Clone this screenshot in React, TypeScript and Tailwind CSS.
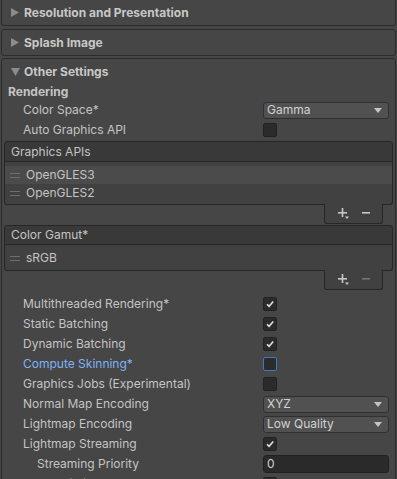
const font = "font-['Inter','Liberation_Sans',sans-serif]";

const RightArrow = () => (
    <svg width="8" height="9" viewBox="0 0 8 9" className="shrink-0">
        <polygon points="0,0 8,4.5 0,9" fill="#8c8c8c" />
    </svg>
);

const DownArrow = () => (
    <svg width="9" height="8" viewBox="0 0 9 8" className="shrink-0">
        <polygon points="0,0 9,0 4.5,8" fill="#8c8c8c" />
    </svg>
);

const Check = () => (
    <svg width="10" height="10" viewBox="0 0 10 10">
        <path d="M2 5.2 L4.1 7.3 L8.2 2.6" stroke="#e4e4e4" strokeWidth="1.5" fill="none" />
    </svg>
);

const Checkbox = ({ checked = false, focused = false }: { checked?: boolean; focused?: boolean }) => (
    <div
        className={`w-[14px] h-[14px] rounded-[2px] bg-[#2b2b2b] border flex items-center justify-center ${focused ? "border-[#3c7bc4]" : "border-[#222222]"}`}
    >
        {checked && <Check />}
    </div>
);

const Dropdown = ({ value }: { value: string }) => (
    <div className="h-[17px] w-full bg-[#515151] border border-[#303030] rounded-[3px] flex items-center justify-between pl-[3px] pr-[6px] text-[12px] text-[#d2d2d2]">
        <span>{value}</span>
        <svg width="8" height="5" viewBox="0 0 8 5">
            <polygon points="0,0 8,0 4,5" fill="#c4c4c4" />
        </svg>
    </div>
);

const Field = ({ value }: { value: string }) => (
    <div className="h-[18px] w-full bg-[#2a2a2a] border border-[#212121] rounded-[3px] flex items-center pl-[3px] text-[12px] text-[#d2d2d2]">
        {value}
    </div>
);

const Row = ({
    label,
    children,
    indent = false,
    blue = false,
    className = "mt-[2px]",
}: {
    label: string;
    children?: React.ReactNode;
    indent?: boolean;
    blue?: boolean;
    className?: string;
}) => (
    <div className={`flex items-center h-[18px] ${className}`}>
        <div
            className={`flex-1 text-[12px] ${indent ? "pl-[35px]" : "pl-[21px]"} ${blue ? "text-[#7fb2f5]" : "text-[#c4c4c4]"}`}
        >
            {label}
        </div>
        <div className="w-[126px] mr-[6px] flex items-center">{children}</div>
    </div>
);

const Handle = () => (
    <div className="w-[10px] flex flex-col gap-[3px] shrink-0">
        <div className="h-[1px] bg-[#6e6e6e]" />
        <div className="h-[1px] bg-[#6e6e6e]" />
    </div>
);

const PlusIcon = () => (
    <svg width="12" height="12" viewBox="0 0 12 12">
        <rect x="0" y="4" width="9" height="1.6" fill="#c8c8c8" />
        <rect x="3.7" y="0" width="1.6" height="9" fill="#c8c8c8" />
        <polygon points="7,8.5 11,8.5 9,11" fill="#c8c8c8" />
    </svg>
);

const MinusIcon = ({ dim = false }: { dim?: boolean }) => (
    <svg width="8" height="2" viewBox="0 0 8 2">
        <rect x="0" y="0" width="8" height="1.6" fill={dim ? "#747474" : "#c8c8c8"} />
    </svg>
);

const ReorderList = ({
    title,
    items,
    selected,
    canRemove = true,
    headerClass,
    bodyPad,
}: {
    title: string;
    items: string[];
    selected?: number;
    canRemove?: boolean;
    headerClass: string;
    bodyPad: string;
}) => (
    <div className="ml-[2px] mr-[2px]">
        <div
            className={`border border-[#262626] rounded-t-[3px] bg-[#393939] flex items-center pl-[6px] text-[12px] text-[#c4c4c4] ${headerClass}`}
        >
            {title}
        </div>
        <div className={`border-x border-b border-[#262626] rounded-b-[3px] bg-[#414141] pt-[4px] ${bodyPad}`}>
            {items.map((item, i) => (
                <div
                    key={item}
                    className={`h-[18px] flex items-center pl-[5px] gap-[6px] text-[12px] text-[#c4c4c4] ${i === selected ? "bg-[#4b4b4b]" : ""}`}
                >
                    <Handle />
                    <span>{item}</span>
                </div>
            ))}
        </div>
        <div className="flex justify-end mr-[10px]">
            <div className="w-[59px] h-[20px] -mt-[1px] border-x border-b border-[#262626] rounded-b-[3px] bg-[#414141] flex items-center justify-center gap-[12px] pt-[1px]">
                <PlusIcon />
                <div className="mb-[2px]">
                    <MinusIcon dim={!canRemove} />
                </div>
            </div>
        </div>
    </div>
);

export default function App() {
    return (
        <div className={`w-[397px] h-[479px] overflow-hidden bg-[#464646] pl-[1px] ${font}`}>
            <div className="w-[395px] h-[26px] border-x border-b border-[#2b2b2b] rounded-b-[3px] flex items-center pl-[9px] gap-[5px]">
                <RightArrow />
                <span className="text-[12px] font-bold text-[#c8c8c8]">Resolution and Presentation</span>
            </div>
            <div className="w-[395px] h-[27px] mt-[3px] border border-[#2b2b2b] rounded-[3px] flex items-center pl-[9px] gap-[5px]">
                <RightArrow />
                <span className="text-[12px] font-bold text-[#c8c8c8]">Splash Image</span>
            </div>
            <div className="w-[395px] mt-[2px] border border-[#2b2b2b] rounded-[3px] pb-[40px]">
                <div className="h-[25px] flex items-center pl-[9px] gap-[5px]">
                    <DownArrow />
                    <span className="text-[12px] font-bold text-[#c8c8c8] -ml-[1px]">Other Settings</span>
                </div>
                <div className="h-[16px] flex items-center pl-[6px] text-[12px] font-bold text-[#c4c4c4]">
                    Rendering
                </div>
                <Row label="Color Space*" className="mt-[1px]">
                    <Dropdown value="Gamma" />
                </Row>
                <Row label="Auto Graphics API">
                    <Checkbox />
                </Row>
                <div className="mt-[2px]">
                    <ReorderList
                        title="Graphics APIs"
                        items={["OpenGLES3", "OpenGLES2"]}
                        selected={0}
                        headerClass="h-[21px]"
                        bodyPad="pb-[2px]"
                    />
                </div>
                <div className="mt-[1px]">
                    <ReorderList
                        title="Color Gamut*"
                        items={["sRGB"]}
                        canRemove={false}
                        headerClass="h-[20px]"
                        bodyPad="pb-[3px]"
                    />
                </div>
                <Row label="Multithreaded Rendering*" className="mt-[5px]">
                    <Checkbox checked />
                </Row>
                <Row label="Static Batching">
                    <Checkbox checked />
                </Row>
                <Row label="Dynamic Batching">
                    <Checkbox checked />
                </Row>
                <Row label="Compute Skinning*" blue>
                    <Checkbox focused />
                </Row>
                <Row label="Graphics Jobs (Experimental)">
                    <Checkbox />
                </Row>
                <Row label="Normal Map Encoding">
                    <Dropdown value="XYZ" />
                </Row>
                <Row label="Lightmap Encoding">
                    <Dropdown value="Low Quality" />
                </Row>
                <Row label="Lightmap Streaming">
                    <Checkbox checked />
                </Row>
                <Row label="Streaming Priority" indent>
                    <Field value="0" />
                </Row>
                <Row label="Frame Timing Stats">
                    <Checkbox />
                </Row>
            </div>
        </div>
    );
}
